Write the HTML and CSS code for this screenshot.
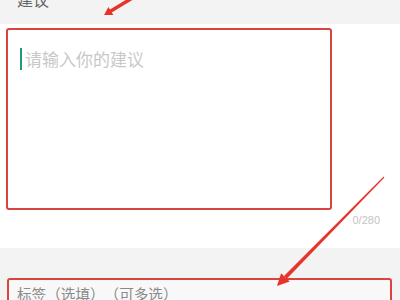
FILE: index.html
```html
<!DOCTYPE html>
<html lang="zh">
<head>
<meta charset="utf-8">
<link rel="stylesheet" href="styles.css">
</head>
<body>
<div class="page">
  <div class="top-band">
    <div class="section-title">建议</div>
  </div>
  <div class="editor">
    <div class="input-box">
      <span class="cursor"></span>
      <span class="placeholder">请输入你的建议</span>
    </div>
    <div class="counter-row"><span class="counter">0/280</span></div>
  </div>
  <div class="tags-band">
    <div class="tags-box">
      <span class="tags-label">标签（选填）（可多选）</span>
    </div>
  </div>
  <svg class="arrows" width="400" height="300" viewBox="0 0 400 300">
    <line x1="134" y1="-3" x2="110" y2="11.5" stroke="#e5352b" stroke-width="3.5" stroke-linecap="round"/>
    <polygon points="104,15 113.4,14.9 108.4,6.9" fill="#e5352b"/>
    <polygon points="384.4,177.4 383.6,176.6 284.0,276.0 286.8,278.8" fill="#e5352b"/>
    <polygon points="277,286 289.7,281.6 281.1,273.2" fill="#e5352b"/>
  </svg>
</div>
</body>
</html>
```

FILE: styles.css
```css
html, body {
  margin: 0;
  padding: 0;
  background: #ffffff;
}
.page {
  position: relative;
  width: 400px;
  height: 300px;
  overflow: hidden;
  font-family: "Noto Sans CJK SC", "Noto Sans", sans-serif;
  text-spacing-trim: space-all;
}
.top-band {
  height: 24px;
  background: #f3f3f3;
  overflow: hidden;
}
.section-title {
  margin-top: -10px;
  padding-left: 17px;
  font-size: 16px;
  line-height: 18px;
  color: #666666;
}
.editor {
  background: #ffffff;
  padding-top: 4px;
  height: 220px;
}
.input-box {
  box-sizing: border-box;
  margin-left: 6px;
  width: 326px;
  height: 182px;
  border: 2px solid #d8453f;
  border-radius: 3px;
  padding: 18px 0 0 12px;
  display: flex;
  align-items: flex-start;
}
.cursor {
  display: block;
  width: 2px;
  height: 22px;
  background: #1c9a7e;
}
.placeholder {
  margin-left: 3px;
  font-size: 17px;
  line-height: 22px;
  color: #c8c8c8;
}
.counter-row {
  display: flex;
  justify-content: flex-end;
  padding-right: 20px;
  padding-top: 3px;
}
.counter {
  font-family: "Liberation Sans", Arial, sans-serif;
  font-size: 11px;
  line-height: 14px;
  color: #c4c4c4;
}
.tags-band {
  background: #f3f3f3;
  height: 52px;
  padding-top: 30px;
  box-sizing: border-box;
}
.tags-box {
  box-sizing: border-box;
  margin: 0 8px 0 7px;
  height: 40px;
  border: 2px solid #d8453f;
  border-radius: 3px;
  background: #f8f8f8;
  padding: 1px 0 0 8px;
}
.tags-label {
  font-size: 14.6px;
  line-height: 18px;
  color: #8a8a8a;
  text-spacing-trim: space-all;
}
.arrows {
  position: absolute;
  left: 0;
  top: 0;
  pointer-events: none;
}
```
